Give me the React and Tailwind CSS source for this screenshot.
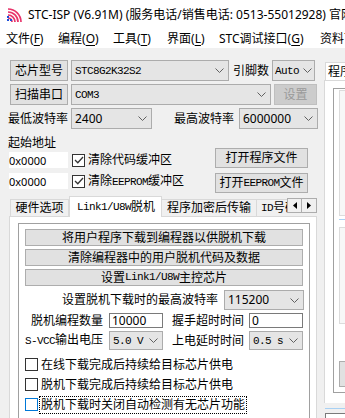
import React from 'react'

const sans = "font-['Noto_Sans','Noto_Sans_CJK_SC',sans-serif]"

function M({ children }) {
  return <span className="font-['Liberation_Mono','Noto_Sans_CJK_SC',monospace] text-[11px] tracking-[-0.6px]">{children}</span>
}

function Logo() {
  return (
    <svg width="16" height="14" viewBox="0 0 16 14" className="shrink-0">
      {[4, 7, 10, 13].map(r => (
        <path key={r} d={`M1 ${14 - r} A ${r} ${r} 0 0 1 ${1 + r} 14`} fill="none" stroke="#e8336a" strokeWidth="1.7" />
      ))}
      <rect x="0" y="11" width="2" height="2" fill="#1d4ed8" />
      <rect x="3" y="11" width="2" height="2" fill="#1d4ed8" />
      <rect x="0" y="8" width="2" height="2" fill="#1d4ed8" />
    </svg>
  )
}

function Chevron() {
  return (
    <svg width="9" height="5" viewBox="0 0 9 5" className="shrink-0">
      <path d="M0.5 0.5 L4.5 4.5 L8.5 0.5" fill="none" stroke="#606060" strokeWidth="1" />
    </svg>
  )
}

function Btn({ className = '', children }) {
  return (
    <div className={`flex items-center justify-center border border-[#adadad] bg-[#e1e1e1] whitespace-nowrap ${className}`}>
      {children}
    </div>
  )
}

function Combo({ className = '', tight = false, children }) {
  return (
    <div className={`flex items-center justify-between border border-[#acacac] bg-[#e5e5e5] whitespace-nowrap ${tight ? 'pl-[2px] pr-[2px]' : 'pl-[3px] pr-[4px]'} ${className}`}>
      <span>{children}</span>
      <Chevron />
    </div>
  )
}

function Check({ checked, focus }) {
  return (
    <div className={`w-[13px] h-[13px] shrink-0 border bg-white flex items-center justify-center ${focus ? 'border-[#0078d7]' : 'border-[#333333]'}`}>
      {checked && (
        <svg width="10" height="8" viewBox="0 0 10 8">
          <path d="M1 4 L3.8 6.8 L9 1" fill="none" stroke="#333333" strokeWidth="1.3" />
        </svg>
      )}
    </div>
  )
}

function Hot({ k }) {
  return <>(<span className="underline underline-offset-2">{k}</span>)</>
}

export default function App() {
  return (
    <div className={`w-[345px] h-[418px] overflow-hidden bg-[#f0f0f0] text-black text-[12px] leading-none ${sans}`}>
      {/* Title bar */}
      <div className="h-[30px] bg-white flex items-center pl-[7px] whitespace-nowrap overflow-hidden">
        <Logo />
        <span className="ml-[5px]">STC-ISP (V6.91M) (服务电话/销售电话: 0513-55012928) 官网: www.STCAI.com</span>
      </div>

      {/* Menu */}
      <div className="h-[18px] bg-white flex items-center pl-[6px] whitespace-nowrap overflow-hidden">
        <span className="w-[52px] shrink-0">文件<Hot k="F" /></span>
        <span className="w-[55px] shrink-0">编程<Hot k="O" /></span>
        <span className="w-[54px] shrink-0">工具<Hot k="T" /></span>
        <span className="w-[52px] shrink-0">界面<Hot k="L" /></span>
        <span className="w-[101px] shrink-0">STC调试接口<Hot k="G" /></span>
        <span className="shrink-0">资料下载<Hot k="D" /></span>
      </div>

      <div className="flex">
        {/* Left column */}
        <div className="w-[323px] shrink-0">
          <div className="flex items-center mt-[12px] pl-[10px] h-[21px]">
            <Btn className="w-[58px] h-[21px]">芯片型号</Btn>
            <Combo className="ml-[3px] w-[158px] h-[21px]"><M>STC8G2K32S2</M></Combo>
            <span className="ml-[4px] w-[36px] shrink-0">引脚数</span>
            <Combo tight className="ml-[3px] w-[43px] h-[21px]"><M>Auto</M></Combo>
          </div>

          <div className="flex items-center mt-[3px] pl-[10px] h-[21px]">
            <Btn className="w-[58px] h-[21px]">扫描串口</Btn>
            <Combo className="ml-[3px] w-[200px] h-[21px]"><M>COM3</M></Combo>
            <div className="ml-[3px] w-[43px] h-[21px] flex items-center justify-center border border-[#bfbfbf] bg-[#cccccc] text-[#9a9a9a]">设置</div>
          </div>

          <div className="flex items-center mt-[3px] pl-[8px] h-[21px]">
            <span className="w-[60px] shrink-0 whitespace-nowrap">最低波特率</span>
            <Combo className="ml-[3px] w-[81px] h-[21px]">2400</Combo>
            <span className="ml-[22px] w-[60px] shrink-0 whitespace-nowrap">最高波特率</span>
            <Combo className="ml-[5px] w-[79px] h-[21px]">6000000</Combo>
          </div>

          <div className="flex items-start">
            <div className="w-[215px] shrink-0 pl-[8px]">
              <div className="mt-[7px] h-[14px] flex items-center">起始地址</div>
              <div className="mt-[2px] flex items-center h-[16px]">
                <div className="ml-[1px] w-[59px] h-[16px] bg-white flex items-center text-[11px]">0x0000</div>
                <div className="ml-[4px]"><Check checked /></div>
                <span className="ml-[3px] whitespace-nowrap">清除代码缓冲区</span>
              </div>
              <div className="mt-[5px] flex items-center h-[16px]">
                <div className="ml-[1px] w-[59px] h-[16px] bg-white flex items-center text-[11px]">0x0000</div>
                <div className="ml-[4px]"><Check checked /></div>
                <span className="ml-[3px] whitespace-nowrap">清除<M>EEPROM</M>缓冲区</span>
              </div>
            </div>
            <div>
              <Btn className="mt-[19px] w-[93px] h-[20px]">打开程序文件</Btn>
              <Btn className="mt-[5px] w-[93px] h-[20px]">打开<M>EEPROM</M>文件</Btn>
            </div>
          </div>

          {/* Tabs */}
          <div className="mt-[3px] ml-[9px] w-[308px] h-[20px] flex items-end whitespace-nowrap">
            <div className="ml-[1px] w-[59px] h-[17px] border border-b-0 border-[#d9d9d9] bg-[#f0f0f0] flex items-center justify-center">硬件选项</div>
            <div className="w-[93px] h-[21px] -mb-px relative z-10 border border-b-0 border-[#d9d9d9] bg-white flex items-center pl-[7px]">
              <M>Link1/U8W</M>脱机
            </div>
            <div className="w-[95px] h-[17px] border border-l-0 border-b-0 border-[#d9d9d9] bg-[#f0f0f0] flex items-center justify-center">程序加密后传输</div>
            <div className="w-[30px] h-[17px] border-t border-[#d9d9d9] bg-[#f0f0f0] flex items-center pl-[4px] overflow-hidden"><M>ID</M>号码</div>
            <div className="self-start mt-[2px] flex">
              <div className="w-[15px] h-[15px] border border-[#adadad] bg-[#f0f0f0] flex items-center justify-center">
                <svg width="4" height="7" viewBox="0 0 4 7"><path d="M4 0 L0 3.5 L4 7 Z" fill="#000" /></svg>
              </div>
              <div className="w-[15px] h-[15px] border border-l-0 border-[#adadad] bg-[#f0f0f0] flex items-center justify-center">
                <svg width="4" height="7" viewBox="0 0 4 7"><path d="M0 0 L4 3.5 L0 7 Z" fill="#000" /></svg>
              </div>
            </div>
          </div>

          {/* Tab pane */}
          <div className="ml-[9px] w-[308px] h-[210px] border border-[#d9d9d9] bg-white pt-[6px] pl-[8px]">
            <div className="w-[292px] h-[250px] border border-[#a0a0a0] pt-[5px] pl-[6px]">
              <div className="flex flex-col gap-[3px]">
                <Btn className="w-[278px] h-[17px]">将用户程序下载到编程器以供脱机下载</Btn>
                <Btn className="w-[278px] h-[17px]">清除编程器中的用户脱机代码及数据</Btn>
                <Btn className="w-[278px] h-[17px]">设置<M>Link1/U8W</M>主控芯片</Btn>
              </div>

              <div className="mt-[4px] h-[20px] flex items-center">
                <span className="w-[193px] text-right whitespace-nowrap">设置脱机下载时的最高波特率</span>
                <Combo className="ml-[6px] w-[80px] h-[20px]">115200</Combo>
              </div>

              <div className="mt-[3px] h-[15px] flex items-center whitespace-nowrap">
                <span className="w-[78px] text-right">脱机编程数量</span>
                <div className="ml-[6px] w-[54px] h-[15px] border border-[#7a7a7a] bg-white flex items-center pl-[2px]">10000</div>
                <span className="ml-[9px] w-[77px]">握手超时时间</span>
                <div className="w-[54px] h-[15px] border border-[#7a7a7a] bg-white flex items-center pl-[2px]">0</div>
              </div>

              <div className="mt-[3px] h-[19px] flex items-center whitespace-nowrap">
                <span className="w-[78px] text-right"><M>S-VCC</M>输出电压</span>
                <Combo className="ml-[6px] w-[54px] h-[19px]"><M>5.0 V</M></Combo>
                <span className="ml-[9px] w-[77px]">上电延时时间</span>
                <Combo className="w-[54px] h-[19px]"><M>0.5 s</M></Combo>
              </div>

              <div className="mt-[8px] flex flex-col gap-[7px] whitespace-nowrap">
                <div className="flex items-center h-[13px]">
                  <Check />
                  <span className="ml-[3px]">在线下载完成后持续给目标芯片供电</span>
                </div>
                <div className="flex items-center h-[13px]">
                  <Check />
                  <span className="ml-[3px]">脱机下载完成后持续给目标芯片供电</span>
                </div>
                <div className="flex items-center h-[13px]">
                  <Check focus />
                  <span className="ml-[1px] px-[1px] py-[2px] border border-dotted border-black">脱机下载时关闭自动检测有无芯片功能</span>
                </div>
              </div>
            </div>
          </div>
        </div>

        {/* Right column */}
        <div className="flex-1 min-w-0 overflow-hidden">
          <div className="mt-[14px] ml-[2px] h-[18px] w-[60px] border border-b-0 border-[#d9d9d9] bg-white flex items-center pl-[2px] whitespace-nowrap">程序文件</div>
          <div className="ml-[1px] h-[323px] border-l border-t border-[#d9d9d9] bg-white pt-[7px] pl-[8px]">
            <div className="h-[305px] border-l border-t border-b border-[#a0a0a0] pt-[1px] pl-[5px]">
              <div className="h-[126px] border border-r-0 border-[#dcdcdc] bg-[#f7f7f7]" />
              <div className="mt-[3px] h-px bg-[#a8d1f4]" />
              <div className="mt-[7px] h-[97px] border border-r-0 border-[#dcdcdc] bg-[#f7f7f7]" />
              <div className="mt-[37px] h-[26px] border border-r-0 border-[#adadad] bg-[#e1e1e1]" />
            </div>
          </div>
          <div className="mt-[5px] ml-[2px] h-px bg-[#a8d1f4]" />
          <div className="mt-[4px] ml-[2px] h-[20px] border border-r-0 border-[#7a7a7a] bg-white" />
        </div>
      </div>
    </div>
  )
}
